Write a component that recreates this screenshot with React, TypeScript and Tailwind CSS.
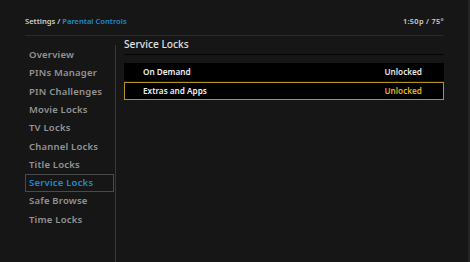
import React from 'react';

const MENU = [
  'Overview',
  'PINs Manager',
  'PIN Challenges',
  'Movie Locks',
  'TV Locks',
  'Channel Locks',
  'Title Locks',
  'Service Locks',
  'Safe Browse',
  'Time Locks',
];

const ROWS = [
  { label: 'On Demand', value: 'Unlocked', focused: false },
  { label: 'Extras and Apps', value: 'Unlocked', focused: true },
];

const App: React.FC = () => {
  const selected = 'Service Locks';

  return (
    <div
      className="w-[470px] h-[262px] bg-[#161616] flex overflow-hidden"
      style={{ fontFamily: '"Noto Sans", "Open Sans", sans-serif' }}
    >
      <div className="flex-1 flex flex-col">
        {/* header */}
        <div className="ml-[25px] w-[419px] h-[36px] border-b border-[#2a2a2a] flex items-end justify-between pb-[8px] text-[7.6px] font-semibold">
          <div>
            <span className="text-[#cfcfcf]">Settings / </span>
            <span className="text-[#1b8ad0]">Parental Controls</span>
          </div>
          <div className="text-[#cfcfcf] text-[7.4px] tracking-[0.3px]">1:50p / 75°</div>
        </div>

        <div className="flex flex-1">
          {/* sidebar */}
          <div className="ml-[25px] w-[91px] mt-[9px] border-r border-[#383838] flex flex-col pt-[1px]">
            {MENU.map((item) => (
              <div
                key={item}
                className={
                  item === selected
                    ? 'h-[18.3px] flex items-center pl-[3px] mr-[1px] border border-[#4a4a4a] text-[#1b8ad0] text-[9.5px] font-semibold tracking-[0.2px]'
                    : 'h-[18.3px] flex items-center pl-[4px] text-[#939393] text-[9.5px] font-semibold tracking-[0.2px]'
                }
              >
                {item}
              </div>
            ))}
          </div>

          {/* content */}
          <div className="ml-[8px] w-[320px] flex flex-col">
            <div className="h-[19px] border-b border-[#050505] flex items-center text-[10.2px] font-medium text-[#e0e0e0] pb-[1px]">
              Service Locks
            </div>
            <div className="mt-[8px] flex flex-col gap-[1px]">
              {ROWS.map((row) => (
                <div
                  key={row.label}
                  className={
                    row.focused
                      ? 'h-[18px] bg-black border border-[#b3951c] flex items-center justify-between pl-[18px] pr-[21px] text-[8.2px] font-semibold'
                      : 'h-[18px] bg-black flex items-center justify-between pl-[19px] pr-[22px] text-[8.2px] font-semibold'
                  }
                >
                  <span className="text-[#f0f0f0]">{row.label}</span>
                  <span className={row.focused ? 'text-[#e2b51c]' : 'text-[#e8e8e8]'}>{row.value}</span>
                </div>
              ))}
            </div>
          </div>
        </div>
      </div>
      <div className="w-[2px] bg-[#222222]" />
    </div>
  );
};

export default App;
